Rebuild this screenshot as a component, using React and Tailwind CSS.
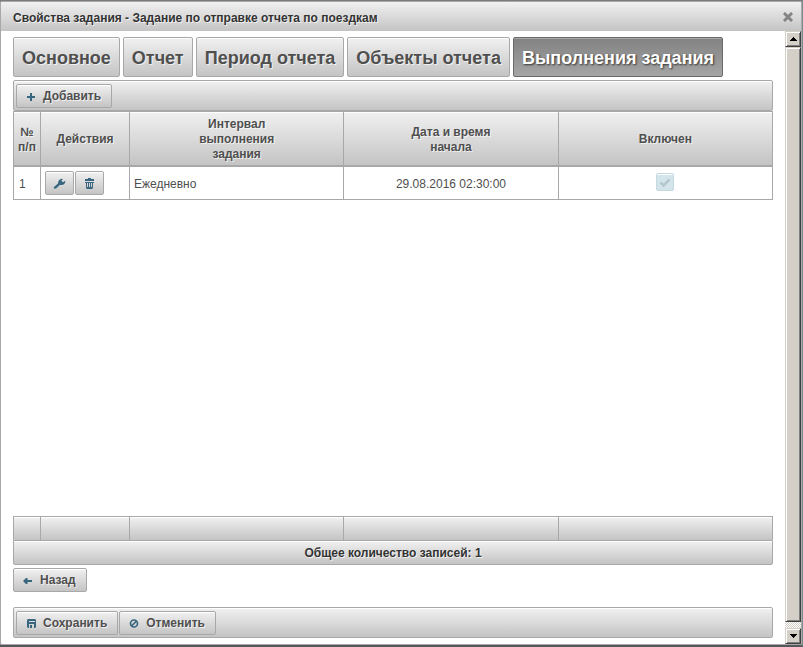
import { useState } from "react";
import clsx from "clsx";

const TABS = [
  "Основное",
  "Отчет",
  "Период отчета",
  "Объекты отчета",
  "Выполнения задания",
];

const ROWS = [
  { id: 1, interval: "Ежедневно", start: "29.08.2016 02:30:00", enabled: true },
];

const BAR =
  "border border-[#a8a8a8] bg-linear-to-b from-[#f1f1f1] to-[#c4c4c4] shadow-[inset_0_1px_0_#fff]";
const HEAD_CELL =
  "border-t border-r border-[#a8a8a8] bg-linear-to-b from-[#f1f1f1] to-[#c4c4c4] shadow-[inset_0_1px_0_#fff] first:border-l";
const BODY_CELL = "border-r border-b border-[#a8a8a8] px-1 first:border-l";
const SCROLL_PART =
  "border border-t-[#d4d0c8] border-r-[#404040] border-b-[#404040] border-l-[#d4d0c8] bg-[#d4d0c8] shadow-[inset_1px_1px_0_#fff,inset_-1px_-1px_0_#808080]";

function Icon({ name }) {
  return (
    <svg viewBox="0 0 16 16" className="h-4 w-4 shrink-0 text-[#38667f]" fill="currentColor" aria-hidden="true">
      {name === "plus" && <path d="M7 5h2v3h3v2H9v3H7v-3H4V8h3z" />}
      {name === "back" && <path d="M3 9l3-3h1.500v2H12v2H7.500v2H6z" />}
      {name === "wrench" && (
        <path d="M2 12L6 8.500C6 6 7.400 4.200 10 3.800L11 4 9.500 5.600 10.200 6.800 11.600 7 13.200 5.400C13.500 8.200 11.700 10.200 8.800 10.100L7.800 10.100 4.400 13.200C2.800 14.200 1 13.300 2 12z" />
      )}
      {name === "trash" && (
        <path
          fillRule="evenodd"
          d="M6 3h3v1h3v2H3V4h3zM3 7h9v1h-1v5l-1 1H5l-1-1V8H3zM5 8v4h1V8zM7 8v4h1V8zM9 8v4h1V8z"
        />
      )}
      {name === "save" && (
        <path
          fillRule="evenodd"
          d="M5 4h7l1 1v7l-1 1H5l-1-1V5zM6 6v1h6V6zM6 9v4h5V9zM7 10h2v3H7z"
        />
      )}
      {name === "cancel" && (
        <>
          <circle cx="8" cy="8.500" r="3.500" fill="none" stroke="currentColor" strokeWidth="1.700" />
          <path d="M5.500 11l5-5" stroke="currentColor" strokeWidth="1.700" />
        </>
      )}
    </svg>
  );
}

function Button({ icon, children }) {
  return (
    <button
      type="button"
      className={clsx(
        BAR,
        "flex h-6 items-center gap-1 rounded-xs pr-[10px] pl-[6px] font-bold text-[#4f4f4f] text-shadow-[1px_1px_0_#ffffffb3]",
      )}
    >
      <Icon name={icon} />
      {children}
    </button>
  );
}

function IconButton({ icon, label }) {
  return (
    <button
      type="button"
      aria-label={label}
      className={clsx(BAR, "flex h-6 w-[29px] items-center justify-center rounded-xs")}
    >
      <Icon name={icon} />
    </button>
  );
}

function Columns() {
  return (
    <colgroup>
      <col className="w-[28px]" />
      <col className="w-[89px]" />
      <col />
      <col />
      <col />
    </colgroup>
  );
}

function ScrollBar() {
  return (
    <div className="flex w-4 shrink-0 flex-col">
      <button type="button" aria-label="Вверх" className={clsx(SCROLL_PART, "flex h-4 items-center justify-center")}>
        <svg viewBox="0 0 7 4" className="h-1 w-[7px]" shapeRendering="crispEdges" aria-hidden="true">
          <path d="M3 0h1v1h1v1h1v1h1v1H0V3h1V2h1V1h1z" />
        </svg>
      </button>
      <div className={clsx(SCROLL_PART, "flex-1")} />
      <div className="h-[6px] bg-[repeating-conic-gradient(#d4d0c8_0_25%,#fff_0_50%)] bg-size-[2px_2px]" />
      <button type="button" aria-label="Вниз" className={clsx(SCROLL_PART, "flex h-4 items-center justify-center")}>
        <svg viewBox="0 0 7 4" className="h-1 w-[7px]" shapeRendering="crispEdges" aria-hidden="true">
          <path d="M0 0h7v1H6v1H5v1H4v1H3V3H2V2H1V1H0z" />
        </svg>
      </button>
    </div>
  );
}

export default function App() {
  const [active, setActive] = useState(4);

  return (
    <div className="flex h-screen flex-col border-t border-r border-b-2 border-t-[#7b7b7b] border-r-[#7d8a90] border-b-[#54585b] bg-[#7d8a90] font-['Liberation_Sans',Arial,sans-serif] text-xs text-[#4f4f4f]">
      <div className="flex min-h-0 flex-1 flex-col overflow-hidden rounded-xs border border-[#a8a8a8] bg-white">
        <header className="flex h-[29px] shrink-0 items-center justify-between bg-linear-to-b from-[#f1f1f1] to-[#c4c4c4] pr-2 pl-3">
          <h1 className="pt-[2px] font-bold text-[#333] text-shadow-[1px_1px_0_#ffffffb3]">
            Свойства задания - Задание по отправке отчета по поездкам
          </h1>
          <button type="button" aria-label="Закрыть">
            <svg viewBox="0 0 10 10" className="h-[10px] w-[10px]" aria-hidden="true">
              <path d="M2 2l6 6M8 2L2 8" stroke="#858585" strokeWidth="3" strokeLinecap="square" />
            </svg>
          </button>
        </header>

        <div className="flex min-h-0 flex-1">
          <main className="flex min-w-0 flex-1 flex-col px-3 pt-[6px] pb-[6px]">
            <nav className="flex gap-[3px]">
              {TABS.map((tab, index) => (
                <button
                  key={tab}
                  type="button"
                  onClick={() => setActive(index)}
                  className={clsx(
                    "h-10 rounded-xs border px-2 pt-[2px] text-lg font-bold whitespace-nowrap",
                    index === active
                      ? "border-[#6a6a6a] bg-linear-to-b from-[#828282] to-[#a5a5a5] text-white shadow-[inset_0_1px_0_#a8a8a8] text-shadow-[1px_1px_2px_#333]"
                      : "border-[#a8a8a8] bg-linear-to-b from-[#f1f1f1] to-[#c4c4c4] text-[#4f4f4f] shadow-[inset_0_1px_0_#fff] text-shadow-[1px_1px_0_#ffffffb3]",
                  )}
                >
                  {tab}
                </button>
              ))}
            </nav>

            <div className={clsx(BAR, "mt-[3px] flex rounded-xs px-[2px] pt-[3px] pb-[2px]")}>
              <Button icon="plus">Добавить</Button>
            </div>

            <div className="min-h-0 flex-1">
              <table className="w-full table-fixed border-separate border-spacing-0">
                <Columns />
                <thead className="text-shadow-[1px_1px_0_#ffffffb3]">
                  <tr className="h-14 leading-[15px]">
                    <th className={clsx(HEAD_CELL, "border-b-2 pt-[2px]")}>
                      №<br />
                      п/п
                    </th>
                    <th className={clsx(HEAD_CELL, "border-b-2 pt-[2px]")}>Действия</th>
                    <th className={clsx(HEAD_CELL, "border-b-2 pt-[2px]")}>
                      Интервал
                      <br />
                      выполнения
                      <br />
                      задания
                    </th>
                    <th className={clsx(HEAD_CELL, "border-b-2 pt-[2px]")}>
                      Дата и время
                      <br />
                      начала
                    </th>
                    <th className={clsx(HEAD_CELL, "border-b-2 pt-[2px]")}>Включен</th>
                  </tr>
                </thead>
                <tbody>
                  {ROWS.map((row) => (
                    <tr key={row.id} className="h-[33px]">
                      <td className={clsx(BODY_CELL, "pt-[2px] pl-[5px]")}>{row.id}</td>
                      <td className={BODY_CELL}>
                        <div className="flex gap-px">
                          <IconButton icon="wrench" label="Изменить" />
                          <IconButton icon="trash" label="Удалить" />
                        </div>
                      </td>
                      <td className={clsx(BODY_CELL, "pt-[2px]")}>{row.interval}</td>
                      <td className={clsx(BODY_CELL, "pt-[2px] text-center")}>{row.start}</td>
                      <td className={clsx(BODY_CELL, "pb-[2px]")}>
                        <div className="grid justify-center">
                          <input
                            type="checkbox"
                            aria-label="Включен"
                            defaultChecked={row.enabled}
                            disabled
                            className="col-start-1 row-start-1 h-[18px] w-[18px] appearance-none rounded-xs border border-[#c5d9e2] bg-[#d3e4eb] shadow-[inset_0_1px_0_#fff]"
                          />
                          <svg
                            viewBox="0 0 18 18"
                            className="pointer-events-none col-start-1 row-start-1 h-[18px] w-[18px]"
                            aria-hidden="true"
                          >
                            <path d="M4.500 9.500l3 3L13.500 6.500" fill="none" stroke="#b5c6cd" strokeWidth="2.500" />
                          </svg>
                        </div>
                      </td>
                    </tr>
                  ))}
                </tbody>
              </table>
            </div>

            <table className="w-full table-fixed border-separate border-spacing-0">
              <Columns />
              <tfoot>
                <tr className="h-6">
                  <td className={HEAD_CELL} />
                  <td className={HEAD_CELL} />
                  <td className={HEAD_CELL} />
                  <td className={HEAD_CELL} />
                  <td className={HEAD_CELL} />
                </tr>
              </tfoot>
            </table>
            <div
              className={clsx(
                BAR,
                "flex h-[25px] items-center justify-center rounded-b-xs font-bold text-[#333] text-shadow-[1px_1px_0_#ffffffb3]",
              )}
            >
              Общее количество записей: 1
            </div>

            <div className="mt-[3px] flex">
              <Button icon="back">Назад</Button>
            </div>

            <footer className={clsx(BAR, "mt-[15px] flex gap-px rounded-xs px-[2px] pt-[3px] pb-[2px]")}>
              <Button icon="save">Сохранить</Button>
              <Button icon="cancel">Отменить</Button>
            </footer>
          </main>
          <ScrollBar />
        </div>
      </div>
    </div>
  );
}
